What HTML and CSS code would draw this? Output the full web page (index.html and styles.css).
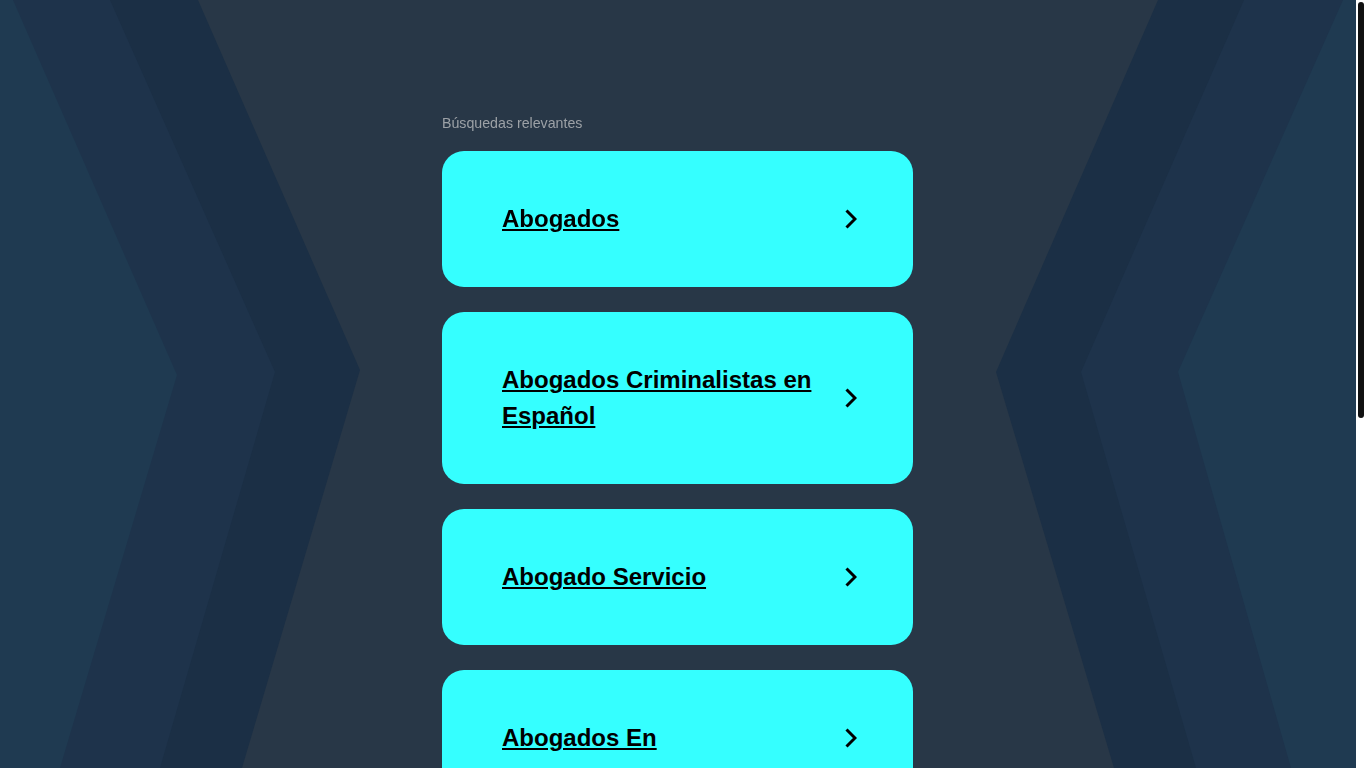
FILE: index.html
```html
<!DOCTYPE html>
<html lang="es">
<head>
<meta charset="utf-8">
<title>Búsquedas relevantes</title>
<link rel="stylesheet" href="styles.css">
</head>
<body>
<div class="backdrop" aria-hidden="true">
  <svg viewBox="0 0 1356 768" preserveAspectRatio="none" width="100%" height="100%">
    <polygon points="0,0 198,0 360,370 242,768 0,768" fill="#1b2f45"/>
    <polygon points="0,0 110,0 275,372 160,768 0,768" fill="#1e334b"/>
    <polygon points="0,0 13,0 177,375 60,768 0,768" fill="#1f3a51"/>
    <polygon points="1158,0 1356,0 1356,768 1114,768 996,372" fill="#1b2f45"/>
    <polygon points="1244,0 1356,0 1356,768 1196,768 1081,372" fill="#1e334b"/>
    <polygon points="1343,0 1356,0 1356,768 1291,768 1178,372" fill="#1f3a51"/>
  </svg>
</div>
<div class="scrollbar" aria-hidden="true"><div class="thumb"></div></div>
<div class="page">
  <main class="content">
    <p class="label">Búsquedas relevantes</p>
    <ul class="results">
      <li><a class="card" href="#"><span class="card-text">Abogados</span><svg class="arrow" viewBox="0 0 12 20" width="12" height="20"><path d="M1.5 1.5 L10 10 L1.5 18.5" fill="none" stroke="#000" stroke-width="3"/></svg></a></li>
      <li><a class="card" href="#"><span class="card-text">Abogados Criminalistas en Español</span><svg class="arrow" viewBox="0 0 12 20" width="12" height="20"><path d="M1.5 1.5 L10 10 L1.5 18.5" fill="none" stroke="#000" stroke-width="3"/></svg></a></li>
      <li><a class="card" href="#"><span class="card-text">Abogado Servicio</span><svg class="arrow" viewBox="0 0 12 20" width="12" height="20"><path d="M1.5 1.5 L10 10 L1.5 18.5" fill="none" stroke="#000" stroke-width="3"/></svg></a></li>
      <li><a class="card" href="#"><span class="card-text">Abogados En</span><svg class="arrow" viewBox="0 0 12 20" width="12" height="20"><path d="M1.5 1.5 L10 10 L1.5 18.5" fill="none" stroke="#000" stroke-width="3"/></svg></a></li>
      <li><a class="card" href="#"><span class="card-text">Abogados de Inmigración</span><svg class="arrow" viewBox="0 0 12 20" width="12" height="20"><path d="M1.5 1.5 L10 10 L1.5 18.5" fill="none" stroke="#000" stroke-width="3"/></svg></a></li>
    </ul>
  </main>
</div>
</body>
</html>
```

FILE: styles.css
```css
html {
  background: #283747;
}
body {
  margin: 0;
  font-family: "Liberation Sans", Arial, sans-serif;
  color: #000;
}
.backdrop {
  position: fixed;
  top: 0;
  left: 0;
  bottom: 0;
  right: 10px;
  z-index: -1;
}
.backdrop svg {
  display: block;
}
.scrollbar {
  position: fixed;
  top: 0;
  right: 0;
  bottom: 0;
  width: 10px;
  background: #ffffff;
  z-index: 5;
}
.thumb {
  margin: 2px 2px 0 2px;
  height: 416px;
  background: #111111;
  border-radius: 3px;
}
.page {
  margin-right: 11px;
}
.content {
  width: 471px;
  margin: 0 auto;
  padding: 115px 0 300px;
}
.label {
  margin: 0 0 19px;
  font-size: 14.2px;
  line-height: 17px;
  color: #9ca1a6;
}
.results {
  list-style: none;
  margin: 0;
  padding: 0;
  display: flex;
  flex-direction: column;
  gap: 25px;
}
.card {
  display: flex;
  align-items: center;
  background: #35ffff;
  border-radius: 22px;
  padding: 50px 56px 50px 60px;
  color: #000;
  text-decoration: none;
}
.card-text {
  flex: 1;
  font-size: 24px;
  font-weight: bold;
  line-height: 36px;
  text-decoration: underline;
  padding-right: 20px;
}
.arrow {
  flex: none;
  display: block;
}
```
